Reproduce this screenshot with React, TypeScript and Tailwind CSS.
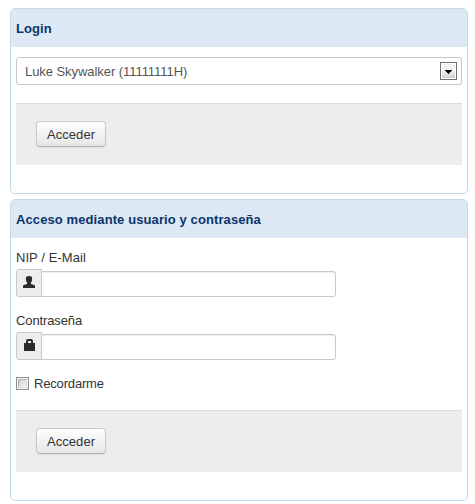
import type { ReactNode } from 'react';

function Panel({ title, children }: { title: string; children: ReactNode }) {
  return (
    <section className="overflow-hidden rounded-[5px] border border-[#c1dbe8] bg-white">
      <h2 className="h-[38px] bg-[#dce8f4] px-[5px] pt-[10px] text-[13px] leading-5 font-bold tracking-[0.1px] text-[#0b356c]">
        {title}
      </h2>
      <div className="px-[5px] pt-[10px] pb-[28px]">{children}</div>
    </section>
  );
}

function Actions() {
  return (
    <div className="h-[62px] border-t border-[#dddddd] bg-[#ededed] px-5 pt-[17px]">
      <button className="block h-[26px] w-[70px] rounded-[4px] border border-[#c8c8c8] border-b-[#b0b0b0] bg-linear-to-b from-white to-[#e6e6e6] pt-px text-center text-[13px] leading-[23px] tracking-[0.08px] text-[#333333] shadow-[0_1px_2px_rgba(0,0,0,0.05)]">
        Acceder
      </button>
    </div>
  );
}

function Field({
  label,
  type,
  icon,
  labelClass,
}: {
  label: string;
  type: string;
  icon: ReactNode;
  labelClass: string;
}) {
  return (
    <div className="mb-[14px]">
      <label className={`mb-px block leading-5 ${labelClass}`}>{label}</label>
      <div className="flex items-end">
        <span className="flex h-7 w-[26px] items-start rounded-l-[3px] border border-[#c8c8c8] bg-[#eeeeee] pt-[6px] pl-[6px]">
          {icon}
        </span>
        <input
          type={type}
          aria-label={label}
          className="-ml-px h-[26px] w-[295px] rounded-r-[3px] border border-[#c8c8c8] bg-white shadow-[inset_0_1px_1px_rgba(0,0,0,0.075)] outline-none"
        />
      </div>
    </div>
  );
}

function UserIcon() {
  return (
    <svg width="12" height="12" viewBox="0 0 12 12" fill="#2b2b2b">
      <path d="M3.6 0.5Q4.4 0 6 0T8.4 0.5Q9.3 1.2 9.1 3V4.3Q8.8 5.8 7.9 6.7V7.9L11.2 9.1Q12 9.5 12 10.4V12H0V10.4Q0 9.5 0.8 9.1L4.1 7.9V6.7Q3.2 5.8 2.9 4.3V3Q2.7 1.2 3.6 0.5Z" />
    </svg>
  );
}

function LockIcon() {
  return (
    <svg width="12" height="12" viewBox="0 0 12 12" fill="#2b2b2b">
      <path
        fillRule="evenodd"
        d="M3 4V2Q3 0 5 0H8Q10 0 10 2V4H12V12H1V4ZM5 4H8V2.4Q8 2 7.6 2H5.4Q5 2 5 2.4Z"
      />
    </svg>
  );
}

export default function App() {
  return (
    <main className="flex h-[504px] w-[475px] flex-col gap-[5px] bg-white pt-2 pr-[7px] pl-[10px] font-['Liberation_Sans',Arial,sans-serif] text-[13px] leading-5 text-[#333333]">
      <Panel title="Login">
        <div className="mb-[18px] flex h-7 items-center justify-between rounded-[3px] border border-[#c8c8c8] bg-white pr-1 pl-2 text-[#555555]">
          <span className="pt-[2px] tracking-[-0.06px]">Luke Skywalker (11111111H)</span>
          <span className="flex h-[18px] w-[17px] border border-[#707070] bg-white p-px">
            <span className="flex grow items-center justify-center bg-linear-to-b from-[#f2f2f2] from-50% to-[#cfcfcf] pt-px">
              <svg width="7" height="4" viewBox="0 0 7 4" shapeRendering="crispEdges">
                <path d="M0 0H7V1H6V2H5V3H4V4H3V3H2V2H1V1H0Z" fill="#000" />
              </svg>
            </span>
          </span>
        </div>
        <Actions />
      </Panel>
      <Panel title="Acceso mediante usuario y contraseña">
        <Field
          label="NIP / E-Mail"
          type="text"
          icon={<UserIcon />}
          labelClass="tracking-[0.06px]"
        />
        <Field
          label="Contraseña"
          type="password"
          icon={<LockIcon />}
          labelClass="tracking-[-0.12px]"
        />
        <label className="mb-4 flex h-5 items-start gap-[5px]">
          <span className="mt-[3px] flex h-[13px] w-[13px] border border-[#8e8f8f] bg-[#f4f4f4] p-px">
            <span className="grow border border-[#aeb3b9] border-r-[#d9dadb] border-b-[#d9dadb] bg-linear-to-br from-[#cbcfd5] to-[#f6f6f6]" />
          </span>
          <span className="tracking-[-0.17px]">Recordarme</span>
        </label>
        <Actions />
      </Panel>
    </main>
  );
}
